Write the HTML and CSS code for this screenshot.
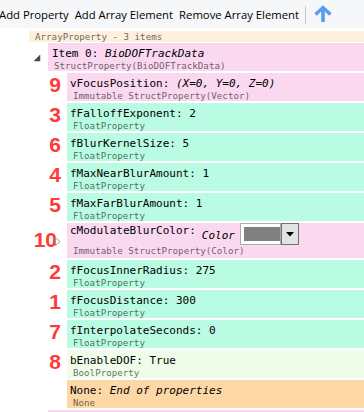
FILE: index.html
```html
<!DOCTYPE html>
<html lang="en">
<head>
  <meta charset="UTF-8">
  <meta name="viewport" content="width=device-width, initial-scale=1.0">
  <link rel="stylesheet" href="styles.css">
</head>
<body>
  <!-- toolbar -->
  <div class="toolbar">
    <span class="tb-btn first">Add Property</span>
    <span class="tb-btn">Add Array Element</span>
    <span class="tb-btn">Remove Array Element</span>
    <span class="tb-sep"></span>
    <span class="tb-icon">
      <svg width="20" height="18" viewBox="0 0 20 18">
        <polyline points="2.5,9.5 10,2.5 17.5,9.5" fill="none" stroke="#5a9bef" stroke-width="3.4" stroke-linejoin="miter" />
        <line x1="10" y1="3.5" x2="10" y2="17" stroke="#5a9bef" stroke-width="3.6" />
      </svg>
    </span>
  </div>

  <div class="tree">
    <div class="array-node">ArrayProperty - 3 items</div>

    <div class="item">
      <div class="expander">
        <svg width="8" height="8" viewBox="0 0 8 8"><polygon points="7,1 7,7 1,7" fill="#444" stroke="#666" stroke-width="0.6" /></svg>
      </div>
      <div class="prop struct head">
        <div class="name">Item 0: <i>BioDOFTrackData</i></div>
        <div class="type">StructProperty(BioDOFTrackData)</div>
      </div>
    </div>

    <!-- children of item 0 -->
    <div class="child">
      <div class="num">9</div>
      <div class="prop struct">
        <div class="name">vFocusPosition: <i>(X=0, Y=0, Z=0)</i></div>
        <div class="type">Immutable StructProperty(Vector)</div>
      </div>
    </div>
    <div class="child">
      <div class="num">3</div>
      <div class="prop float">
        <div class="name">fFalloffExponent: 2</div>
        <div class="type">FloatProperty</div>
      </div>
    </div>
    <div class="child">
      <div class="num">6</div>
      <div class="prop float">
        <div class="name">fBlurKernelSize: 5</div>
        <div class="type">FloatProperty</div>
      </div>
    </div>
    <div class="child">
      <div class="num">4</div>
      <div class="prop float">
        <div class="name">fMaxNearBlurAmount: 1</div>
        <div class="type">FloatProperty</div>
      </div>
    </div>
    <div class="child">
      <div class="num">5</div>
      <div class="prop float">
        <div class="name">fMaxFarBlurAmount: 1</div>
        <div class="type">FloatProperty</div>
      </div>
    </div>
    <div class="child">
      <div class="num ten">
        <span>10</span>
        <svg class="collapsed" width="6" height="9" viewBox="0 0 6 9"><polygon points="0.5,0.5 5,4.5 0.5,8.5" fill="#fff" stroke="#9a9a9a" stroke-width="1" /></svg>
      </div>
      <div class="prop struct color-row">
        <div class="line">
          <span class="name">cModulateBlurColor:</span>
          <i class="name color-label">Color</i>
          <div class="combo">
            <div class="combo-field"><div class="swatch"></div></div>
            <div class="combo-btn">
              <svg width="8" height="5" viewBox="0 0 8 5"><polygon points="0,0 8,0 4,4.5" fill="#000" /></svg>
            </div>
          </div>
        </div>
        <div class="type">Immutable StructProperty(Color)</div>
      </div>
    </div>
    <div class="child">
      <div class="num">2</div>
      <div class="prop float">
        <div class="name">fFocusInnerRadius: 275</div>
        <div class="type">FloatProperty</div>
      </div>
    </div>
    <div class="child">
      <div class="num">1</div>
      <div class="prop float">
        <div class="name">fFocusDistance: 300</div>
        <div class="type">FloatProperty</div>
      </div>
    </div>
    <div class="child">
      <div class="num">7</div>
      <div class="prop float">
        <div class="name">fInterpolateSeconds: 0</div>
        <div class="type">FloatProperty</div>
      </div>
    </div>
    <div class="child">
      <div class="num">8</div>
      <div class="prop bool">
        <div class="name">bEnableDOF: True</div>
        <div class="type">BoolProperty</div>
      </div>
    </div>
    <div class="child">
      <div class="num"></div>
      <div class="prop none">
        <div class="name">None: <i>End of properties</i></div>
        <div class="type">None</div>
      </div>
    </div>

    <!-- next item, only its top edge is in view -->
    <div class="item">
      <div class="expander"></div>
      <div class="prop struct head"></div>
    </div>
  </div>
</body>
</html>
```

FILE: styles.css
```css
body {
  margin: 0;
  overflow: hidden;
  background: #fff;
}

/* toolbar */
.toolbar {
  display: flex;
  align-items: center;
  height: 28px;
  padding-top: 1px;
  box-sizing: border-box;
  background: #f6f7f8;
  font-family: "Open Sans", sans-serif;
  font-size: 11.3px;
  color: #000;
  white-space: nowrap;
}
.tb-btn {
  padding: 0 3px;
}
.tb-btn.first {
  margin-left: -4px;
}
.tb-sep {
  width: 1px;
  height: 18px;
  background: #c8c8c8;
  margin: 0 7px 0 3px;
}
.tb-icon {
  display: flex;
  margin-top: -1px;
}

/* tree */
.tree {
  padding-top: 3px;
  font-family: "DejaVu Sans Mono", monospace;
}
.array-node {
  margin-left: 29px;
  margin-bottom: 1px;
  padding-left: 6px;
  height: 11px;
  line-height: 11px;
  font-size: 9.2px;
  color: rgba(0, 0, 0, 0.62);
  background: #fdf0dd;
}
.item {
  display: grid;
  grid-template-columns: 48px 1fr;
  margin-bottom: 2px;
}
.expander {
  display: flex;
  justify-content: flex-end;
  padding: 11px 7px 0 0;
}
.child {
  display: grid;
  grid-template-columns: 67px 1fr;
  margin-bottom: 2px;
}
.num {
  display: flex;
  justify-content: flex-end;
  padding-right: 6px;
  font-family: "Liberation Sans", Arial, sans-serif;
  font-weight: bold;
  font-size: 21px;
  line-height: 24px;
  color: #fe3a3a;
}
.num.ten {
  padding-top: 5px;
}
.num .collapsed {
  margin: 9px 0 0 -2px;
}

.prop {
  height: 28px;
  box-sizing: border-box;
  padding: 4px 0 0 3px;
  white-space: nowrap;
  overflow: hidden;
}
.prop.head {
  padding-left: 4px;
}
.prop.head .type {
  margin-left: 2px;
}
.struct { background: #fad8f0; }
.float { background: #bafce3; }
.bool { background: #f0fcea; }
.none { background: #fdd8a6; }

.name {
  font-size: 11px;
  line-height: 13px;
  color: #000;
}
.type {
  margin-left: 3px;
  font-size: 9.2px;
  line-height: 11px;
  color: rgba(0, 0, 0, 0.6);
}

/* color struct row */
.prop.color-row {
  height: 35px;
  padding-top: 0;
}
.line {
  display: flex;
  align-items: flex-start;
  height: 22px;
}
.line .name {
  padding-top: 1px;
}
.line .color-label {
  margin: 5px 0 0 6px;
}
.combo {
  display: flex;
  margin-left: 5px;
  height: 22px;
}
.combo-field {
  width: 41px;
  height: 22px;
  box-sizing: border-box;
  border: 1px solid #acacac;
  background: #fff;
  padding: 3px 0 0 3px;
}
.swatch {
  width: 36px;
  height: 14px;
  background: #808080;
}
.combo-btn {
  width: 18px;
  height: 22px;
  box-sizing: border-box;
  border: 1px solid #707070;
  background: #e3e3e3;
  display: flex;
  align-items: center;
  justify-content: center;
}
```
